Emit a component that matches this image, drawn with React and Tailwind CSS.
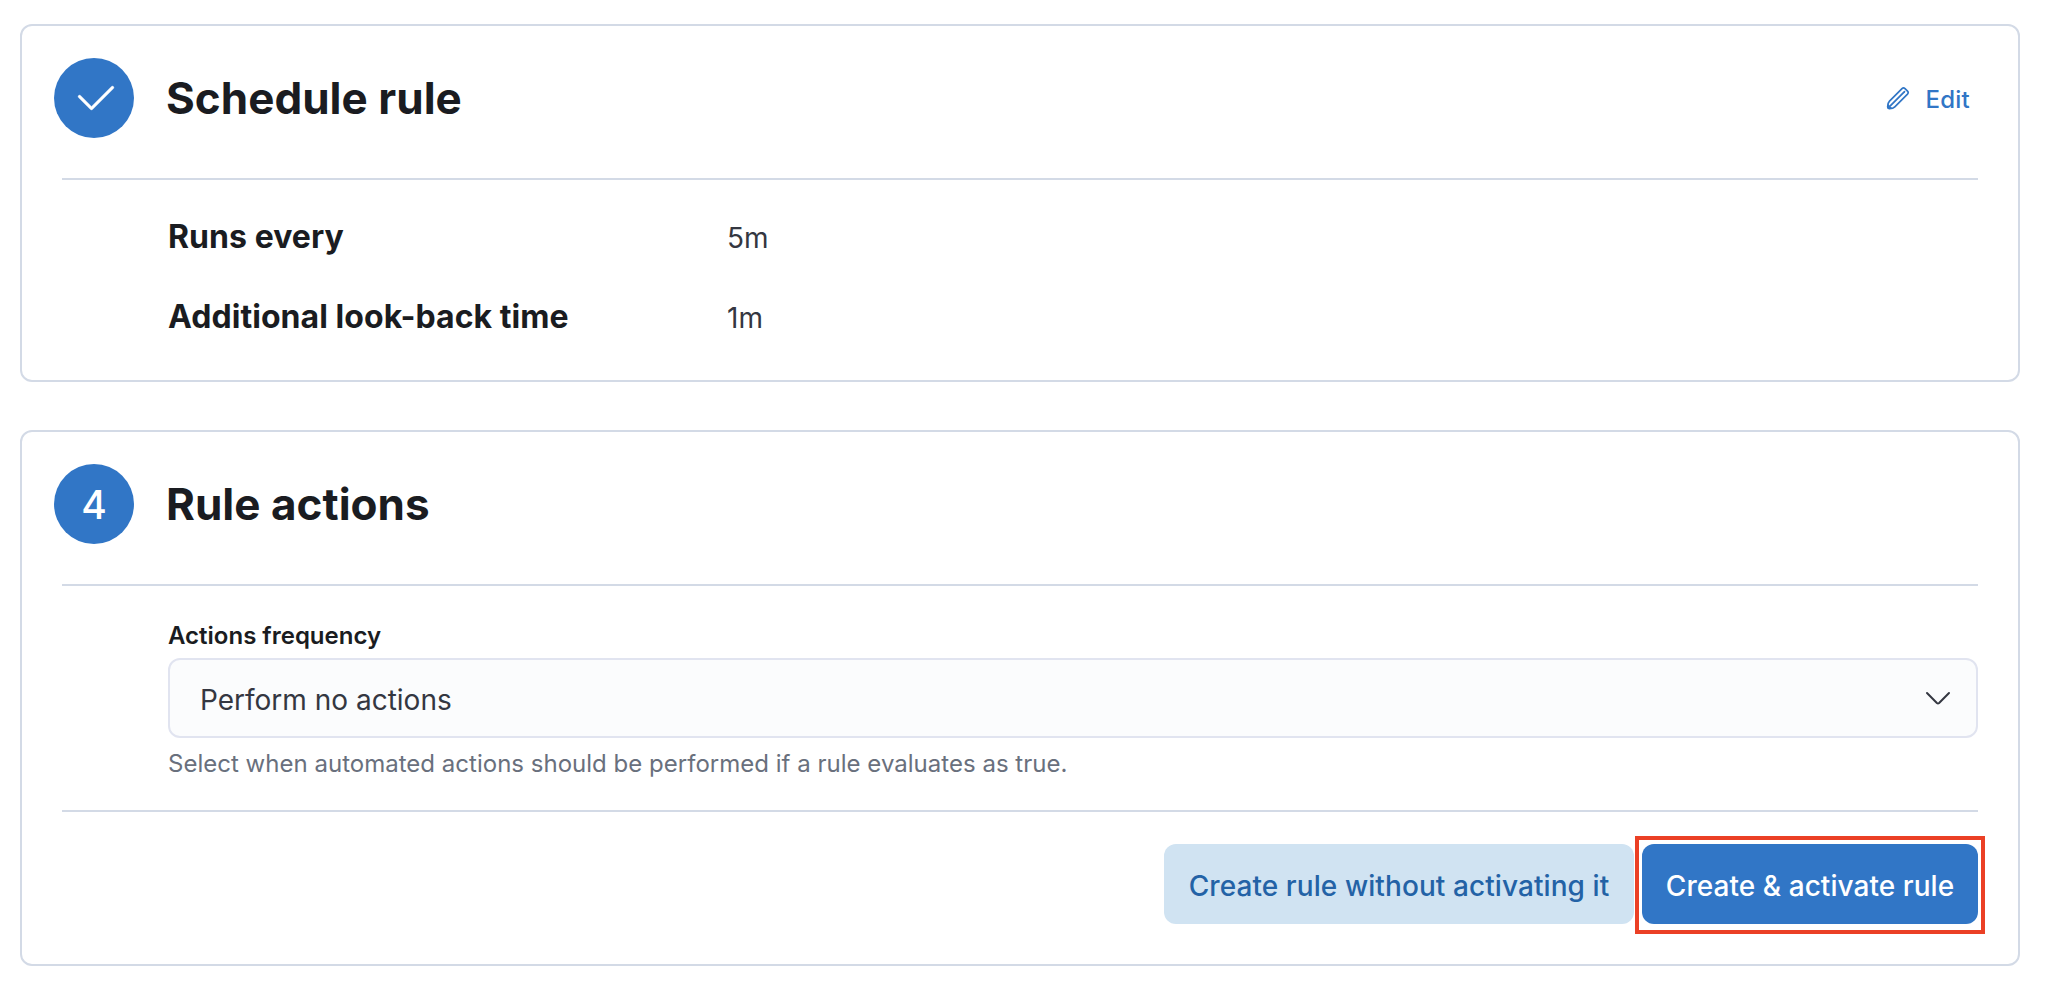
const Card = ({ className, children }) => (
  <section className={`rounded-[12px] border-2 border-[#d3dae6] bg-white ${className}`}>{children}</section>
);

const Header = ({ badge, title, children }) => (
  <header className="flex h-[152px] items-start pt-8 pl-8">
    <div className="flex size-20 items-center justify-center rounded-full bg-[#3176c6] text-[39px] font-[450] leading-none text-white">
      {badge}
    </div>
    <h2 className="ml-8 flex-1 text-[44px] font-bold leading-[80px] tracking-[0.03px] text-[#1a1c21]">{title}</h2>
    {children}
  </header>
);

const Divider = () => <hr className="mx-10 h-0.5 border-0 bg-[#d3dae6]" />;

const CheckIcon = () => (
  <svg className="ml-1 size-12" viewBox="0 0 16 16" fill="currentColor" stroke="currentColor" strokeWidth="0.1">
    <path d="M6.5 12a.502.502 0 0 1-.354-.146l-4-4a.502.502 0 0 1 .708-.708L6.5 10.793l6.646-6.647a.502.502 0 0 1 .708.708l-7 7A.502.502 0 0 1 6.5 12" />
  </svg>
);

const PencilIcon = () => (
  <svg className="size-6" viewBox="0 0 24 24" fill="none" stroke="currentColor" strokeWidth="1.7" strokeLinecap="round" strokeLinejoin="round">
    <path d="M16 2.600Q17.500 1.200 19 2.600L21.500 5.100Q22.900 6.600 21.500 8.100L8.800 20.800Q7 22.700 3.200 22.600Q1.600 22.500 1.700 20.800Q1.600 17 3.500 15.100Z" />
    <path d="M4.500 19.700L18.500 5.700" />
    <path d="M2.200 19.200L5 22H3.200Q2 22 2 20.800Z" fill="currentColor" />
  </svg>
);

const ChevronIcon = () => (
  <svg className="size-8" viewBox="0 0 32 32" fill="none" stroke="currentColor" strokeWidth="2" strokeLinecap="round" strokeLinejoin="round">
    <path d="M5 11l9.900 10q1.100 1 2.200 0L27 11" />
  </svg>
);

const Row = ({ label, value }) => (
  <div className="flex h-20 items-center pl-[146px]">
    <dt className="w-[559px] text-[32px] font-bold leading-[48px] tracking-[0.06px] text-[#1a1c21]">{label}</dt>
    <dd className="pt-0.5 text-[28px] leading-[48px] text-[#343741]">{value}</dd>
  </div>
);

export default function App() {
  return (
    <main className="h-[990px] w-[2046px] bg-white pt-6 pl-5 font-['Inter',sans-serif]">
      <Card className="h-[358px] w-[2000px]">
        <Header badge={<CheckIcon />} title="Schedule rule">
          <button className="mr-12 flex h-20 items-center gap-[15px] text-2xl font-medium text-[#3176c6]">
            <PencilIcon />
            <span className="pt-1 tracking-[0.25px]">Edit</span>
          </button>
        </Header>
        <Divider />
        <dl className="pt-[17px]">
          <Row label="Runs every" value="5m" />
          <Row label="Additional look-back time" value="1m" />
        </dl>
      </Card>

      <Card className="mt-12 h-[536px] w-[2000px]">
        <Header badge="4" title="Rule actions" />
        <Divider />
        <div className="mr-10 ml-[146px] pt-8">
          <label className="block h-10 text-2xl font-semibold leading-[36px] text-[#1a1c21]">Actions frequency</label>
          <div className="flex h-20 items-center justify-between rounded-[12px] border-2 border-[#e1e4f0] bg-[#fbfcfd] pr-[22px] pl-[30px] text-[28px] text-[#343741]">
            <span className="pt-1">Perform no actions</span>
            <ChevronIcon />
          </div>
          <p className="h-[72px] pt-2 text-2xl leading-[36px] tracking-[0.015px] text-[#69707d]">
            Select when automated actions should be performed if a rule evaluates as true.
          </p>
        </div>
        <Divider />
        <footer className="mr-10 mt-8 flex justify-end gap-2">
          <button className="h-20 w-[470px] rounded-[12px] bg-[#d0e3f2] pt-1 text-[28px] font-medium tracking-[0.08px] text-[#2362a6]">
            Create rule without activating it
          </button>
          <div className="relative">
            <button className="h-20 w-[336px] rounded-[12px] bg-[#3176c6] pt-1 text-[28px] font-medium tracking-[0.05px] text-white">
              Create &amp; activate rule
            </button>
            <div className="pointer-events-none absolute -top-2 -right-[7px] -bottom-[10px] -left-[7px] border-4 border-[#eb4025]" />
          </div>
        </footer>
      </Card>
    </main>
  );
}
